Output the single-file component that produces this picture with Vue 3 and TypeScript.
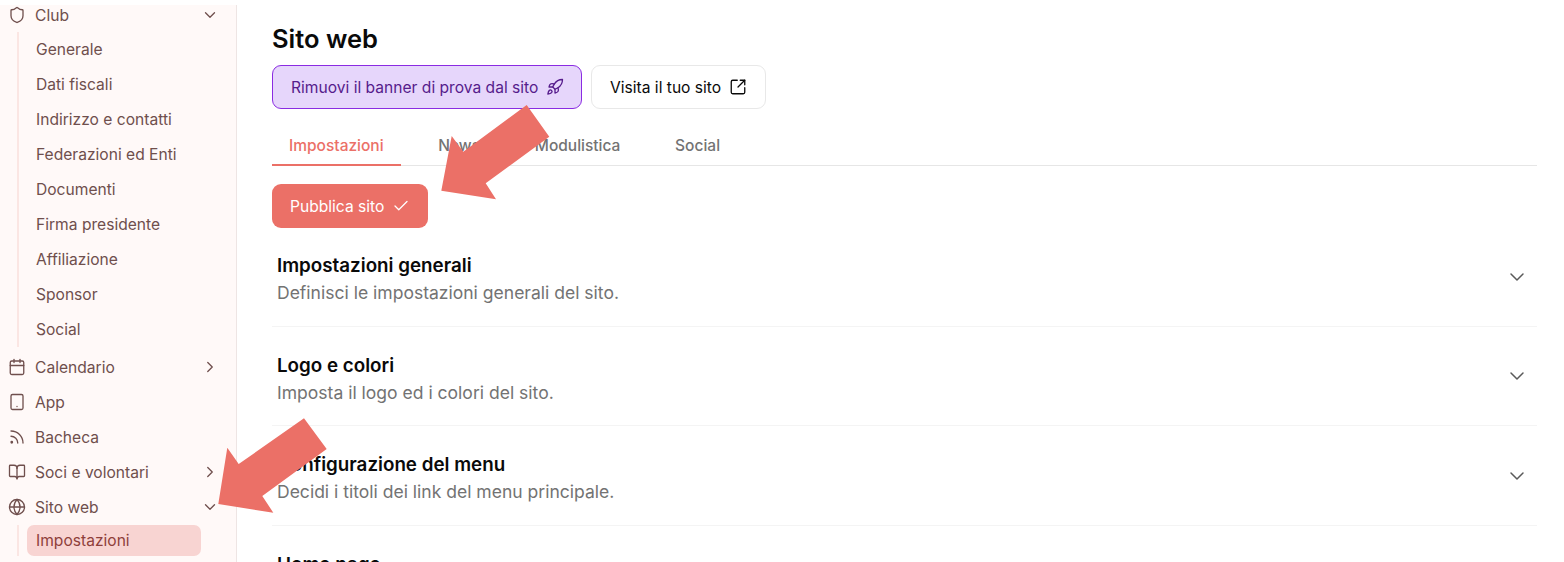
<script setup lang="ts">
const icons: Record<string, string[]> = {
  shield: ['M20 13c0 5-3.5 7.5-7.66 8.95a1 1 0 0 1-.67-.01C7.5 20.5 4 18 4 13V6a1 1 0 0 1 1-1c2 0 4.5-1.2 6.24-2.72a1.17 1.17 0 0 1 1.52 0C14.51 3.81 17 5 19 5a1 1 0 0 1 1 1z'],
  calendar: ['M8 2v4', 'M16 2v4', 'M5 4h14a2 2 0 0 1 2 2v14a2 2 0 0 1-2 2H5a2 2 0 0 1-2-2V6a2 2 0 0 1 2-2z', 'M3 10h18'],
  tablet: ['M6 2h12a2 2 0 0 1 2 2v16a2 2 0 0 1-2 2H6a2 2 0 0 1-2-2V4a2 2 0 0 1 2-2z', 'M12 18h.01'],
  rss: ['M4 11a9 9 0 0 1 9 9', 'M4 4a16 16 0 0 1 16 16', 'M4 19a1 1 0 1 0 2 0a1 1 0 1 0-2 0'],
  book: ['M12 7v14', 'M3 18a1 1 0 0 1-1-1V4a1 1 0 0 1 1-1h5a4 4 0 0 1 4 4 4 4 0 0 1 4-4h5a1 1 0 0 1 1 1v13a1 1 0 0 1-1 1h-6a3 3 0 0 0-3 3 3 3 0 0 0-3-3z'],
  globe: ['M2 12a10 10 0 1 0 20 0a10 10 0 1 0-20 0', 'M12 2a14.5 14.5 0 0 0 0 20 14.5 14.5 0 0 0 0-20', 'M2 12h20'],
  rocket: [
    'M4.5 16.5c-1.5 1.26-2 5-2 5s3.74-.5 5-2c.71-.84.7-2.13-.09-2.91a2.18 2.18 0 0 0-2.91-.09z',
    'm12 15-3-3a22 22 0 0 1 2-3.95A12.88 12.88 0 0 1 22 2c0 2.72-.78 7.5-6 11a22.35 22.35 0 0 1-4 2z',
    'M9 12H4s.55-3.03 2-4c1.62-1.08 5 0 5 0',
    'M12 15v5s3.03-.55 4-2c1.08-1.62 0-5 0-5',
  ],
  external: ['M21 13v6a2 2 0 0 1-2 2H5a2 2 0 0 1-2-2V5a2 2 0 0 1 2-2h6', 'm21 3-9 9', 'M15 3h6v6'],
  check: ['M20 6 9 17l-5-5'],
  down: ['m6 9 6 6 6-6'],
  right: ['m9 18 6-6-6-6'],
}

const clubLinks = [
  'Generale',
  'Dati fiscali',
  'Indirizzo e contatti',
  'Federazioni ed Enti',
  'Documenti',
  'Firma presidente',
  'Affiliazione',
  'Sponsor',
  'Social',
]

const navItems = [
  { label: 'Calendario', icon: 'calendar', arrow: 'right' },
  { label: 'App', icon: 'tablet', arrow: '' },
  { label: 'Bacheca', icon: 'rss', arrow: '' },
  { label: 'Soci e volontari', icon: 'book', arrow: 'right' },
  { label: 'Sito web', icon: 'globe', arrow: 'down' },
]

const tabs = ['Impostazioni', 'News', 'Modulistica', 'Social']

const sections = [
  { title: 'Impostazioni generali', text: 'Definisci le impostazioni generali del sito.' },
  { title: 'Logo e colori', text: 'Imposta il logo ed i colori del sito.' },
  { title: 'Configurazione del menu', text: 'Decidi i titoli dei link del menu principale.' },
  { title: 'Home page', text: '' },
]
</script>

<template>
  <div class="page">
    <aside class="sidebar">
      <div class="sidebar__inner">
        <div class="nav-row">
          <svg class="icon" viewBox="0 0 24 24"><path v-for="d in icons.shield" :key="d" :d="d" /></svg>
          <span class="nav-row__label">Club</span>
          <svg class="icon nav-row__arrow" viewBox="0 0 24 24"><path v-for="d in icons.down" :key="d" :d="d" /></svg>
        </div>
        <ul class="sub-list">
          <li v-for="link in clubLinks" :key="link" class="sub-list__item">{{ link }}</li>
        </ul>
        <div v-for="item in navItems" :key="item.label" class="nav-row">
          <svg class="icon" viewBox="0 0 24 24"><path v-for="d in icons[item.icon]" :key="d" :d="d" /></svg>
          <span class="nav-row__label">{{ item.label }}</span>
          <svg v-if="item.arrow" class="icon nav-row__arrow" viewBox="0 0 24 24">
            <path v-for="d in icons[item.arrow]" :key="d" :d="d" />
          </svg>
        </div>
        <ul class="sub-list sub-list--open">
          <li class="sub-list__item sub-list__item--active">Impostazioni</li>
        </ul>
      </div>
    </aside>

    <main class="main">
      <h1 class="main__title">Sito web</h1>
      <div class="actions">
        <button class="button button--purple" type="button">
          Rimuovi il banner di prova dal sito
          <svg class="icon" viewBox="0 0 24 24"><path v-for="d in icons.rocket" :key="d" :d="d" /></svg>
        </button>
        <button class="button button--white" type="button">
          Visita il tuo sito
          <svg class="icon" viewBox="0 0 24 24"><path v-for="d in icons.external" :key="d" :d="d" /></svg>
        </button>
      </div>

      <div class="tabs">
        <span
          v-for="(tab, index) in tabs"
          :key="tab"
          class="tabs__tab"
          :class="{ 'tabs__tab--active': index === 0 }"
        >{{ tab }}</span>
      </div>

      <button class="button button--coral" type="button">
        Pubblica sito
        <svg class="icon" viewBox="0 0 24 24"><path v-for="d in icons.check" :key="d" :d="d" /></svg>
      </button>

      <section v-for="section in sections" :key="section.title" class="section">
        <div class="section__body">
          <h2 class="section__title">{{ section.title }}</h2>
          <p class="section__text">{{ section.text }}&nbsp;</p>
        </div>
        <svg class="section__chevron" viewBox="0 0 24 24"><path v-for="d in icons.down" :key="d" :d="d" /></svg>
      </section>
    </main>

    <svg class="arrows" viewBox="0 0 1564 562" aria-hidden="true">
      <polygon points="526.7,105 549.3,136.7 485.7,183.3 496,199.3 441.3,190.7 451.7,136 463.3,151.7" />
      <polygon points="304,418.3 326.7,449 262.3,496 273.3,512.7 218.3,504 227.3,447.7 238.7,464" />
    </svg>
  </div>
</template>

<style scoped>
.page {
  position: relative;
  display: flex;
  height: 562px;
  overflow: hidden;
  background: #fff;
  font-family: Inter, "Liberation Sans", sans-serif;
}

.sidebar {
  flex: 0 0 237px;
  box-sizing: border-box;
  margin-top: 5px;
  background: #fff9f8;
  border-right: 1px solid #eee5e4;
  color: #6f4f4d;
  font-size: 15.6px;
}

.sidebar__inner {
  margin-top: -7.5px;
  padding-left: 8px;
}

.nav-row {
  display: flex;
  align-items: center;
  height: 35px;
}

.nav-row__label {
  margin-left: 9px;
}

.nav-row__arrow {
  margin-left: auto;
  margin-right: 17px;
}

.icon {
  flex: none;
  width: 18px;
  height: 18px;
  fill: none;
  stroke: currentColor;
  stroke-width: 1.75;
  stroke-linecap: round;
  stroke-linejoin: round;
}

.sub-list {
  margin: -1px 0 3px 9px;
  padding: 0 0 0 9px;
  list-style: none;
  border-left: 2px solid #fbe6e3;
}

.sub-list__item {
  display: flex;
  align-items: center;
  height: 35px;
  margin-left: -1px;
  padding-left: 9px;
}

.sub-list--open {
  margin-top: 0;
}

.sub-list__item--active {
  width: 174px;
  height: 31px;
  box-sizing: border-box;
  border-radius: 7px;
  background: #f8d4d2;
  color: #8f3f3b;
}

.main {
  flex: 1;
  min-width: 0;
  padding: 22px 27px 0 35px;
}

.main__title {
  margin: 0;
  font-size: 25.5px;
  font-weight: 600;
  line-height: 34px;
  color: #0a0a0a;
}

.actions {
  display: flex;
  gap: 9px;
  margin-top: 9px;
}

.button {
  display: inline-flex;
  align-items: center;
  gap: 7.5px;
  height: 44px;
  box-sizing: border-box;
  padding: 0 18px;
  border: 1px solid transparent;
  border-radius: 9px;
  font: inherit;
  font-size: 15.6px;
  white-space: nowrap;
}

.button--purple {
  width: 310px;
  background: #e6d6fb;
  border-color: #8a2be2;
  color: #561c8c;
}

.button--white {
  width: 175px;
  background: #fff;
  border-color: #e8e8e8;
  color: #0a0a0a;
}

.button--coral {
  display: flex;
  width: 156px;
  padding: 0 17px;
  margin-top: 18px;
  margin-bottom: -1px;
  background: #eb7067;
  color: #fff;
}

.tabs {
  display: flex;
  gap: 20.7px;
  margin-top: 19px;
  border-bottom: 1px solid #e6e6e6;
}

.tabs__tab {
  height: 38px;
  box-sizing: border-box;
  padding: 8px 17px 0;
  margin-bottom: -1px;
  font-size: 15.5px;
  font-weight: 500;
  color: #737373;
  border-bottom: 2px solid transparent;
}

.tabs__tab--active {
  color: #eb7067;
  border-bottom-color: #eb7067;
}

.section {
  display: flex;
  align-items: center;
  justify-content: space-between;
  box-sizing: border-box;
  height: 99.5px;
  padding: 0 8px 0 5px;
  border-bottom: 1px solid #f4f4f4;
}

.section__body {
  padding-top: 6px;
}

.section__title {
  margin: 0;
  font-size: 18.8px;
  font-weight: 600;
  line-height: 27px;
  color: #0a0a0a;
}

.section__text {
  margin: 0;
  font-size: 17.55px;
  line-height: 27px;
  color: #737373;
}

.section__chevron {
  width: 24px;
  height: 24px;
  margin-top: 1px;
  fill: none;
  stroke: #5a5a5a;
  stroke-width: 1.5;
  stroke-linecap: round;
  stroke-linejoin: round;
}

.arrows {
  position: absolute;
  inset: 0;
  width: 100%;
  height: 100%;
  fill: #eb7067;
  pointer-events: none;
}
</style>
